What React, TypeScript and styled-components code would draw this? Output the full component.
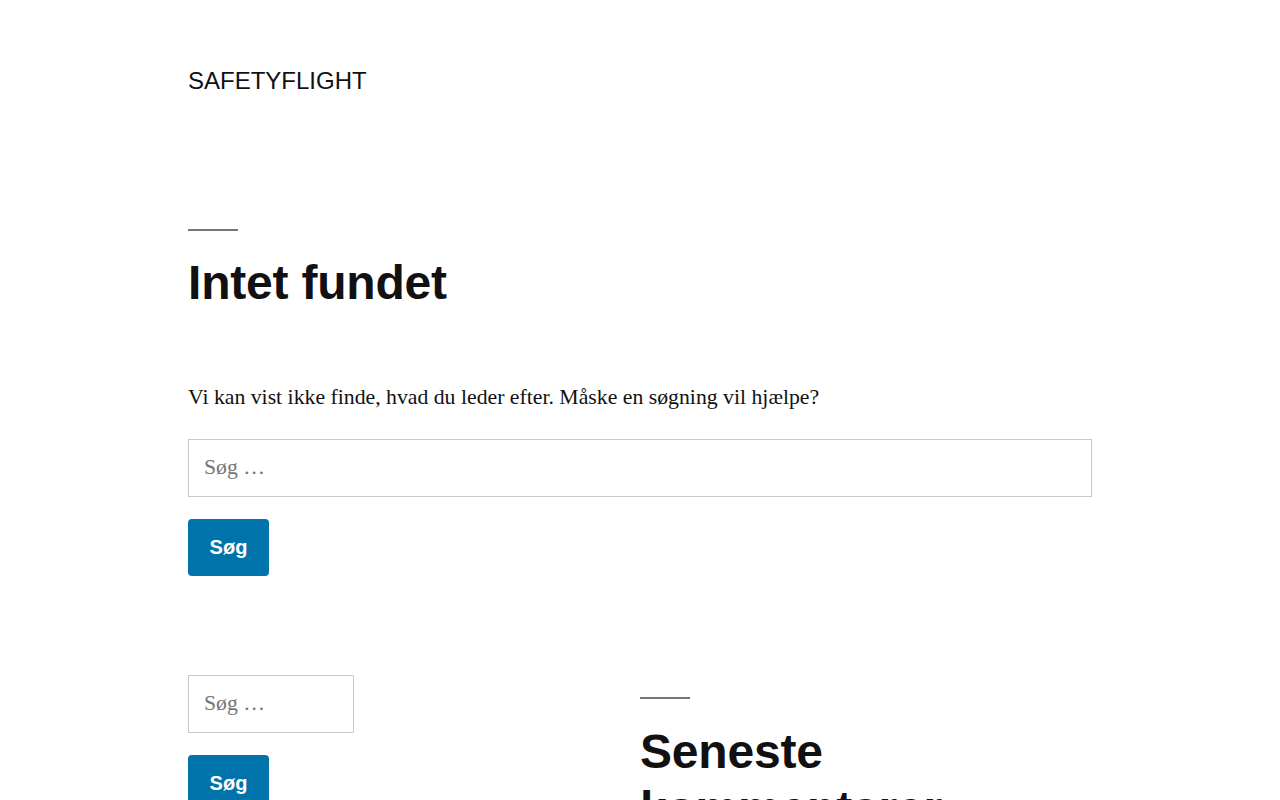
import styled, { createGlobalStyle } from 'styled-components'

const GlobalStyle = createGlobalStyle`
  html, body {
    margin: 0;
    padding: 0;
    background: #fff;
  }

  body {
    color: #111;
    font-family: "Liberation Serif", "Times New Roman", serif;
    font-size: 21.75px;
    line-height: 1.7;
  }

  * {
    box-sizing: border-box;
  }
`

const Page = styled.div`
  max-width: 904px;
  margin: 0 auto;
  padding-top: 65px;
  padding-bottom: 60px;
`

const SiteTitle = styled.div`
  font-family: "Liberation Sans", Arial, sans-serif;
  font-size: 24px;
  line-height: 1.3;
  text-transform: uppercase;
  color: #111;
`

const Main = styled.main`
  padding-top: 133px;
`

const Rule = styled.div`
  width: 50px;
  height: 2px;
  background: #767676;
`

const Heading = styled.h1`
  margin: 23px 0 0;
  font-family: "Liberation Sans", Arial, sans-serif;
  font-size: 48px;
  font-weight: 700;
  line-height: 1.2;
  letter-spacing: -0.2px;
  color: #111;
`

const Lead = styled.p`
  margin: 67px 0 23px;
`

const SearchForm = styled.form<{ $width?: number }>`
  display: flex;
  flex-direction: column;
  align-items: flex-start;
  gap: 22px;

  input {
    width: ${(p) => (p.$width ? `${p.$width}px` : '100%')};
  }
`

const SearchInput = styled.input`
  height: 58px;
  padding: 0 15px;
  border: 1px solid #c9c9c9;
  border-radius: 0;
  background: #fff;
  font-family: "Liberation Serif", "Times New Roman", serif;
  font-size: 21.75px;
  color: #111;
  outline: none;

  &::placeholder {
    color: #767676;
    opacity: 1;
  }
`

const Button = styled.button`
  height: 57px;
  width: 81px;
  padding: 0;
  border: none;
  border-radius: 4px;
  background: #0073aa;
  color: #fff;
  font-family: "Liberation Sans", Arial, sans-serif;
  font-size: 20px;
  font-weight: 700;
  cursor: pointer;
`

const Widgets = styled.aside`
  display: grid;
  grid-template-columns: 1fr 1fr;
  margin-top: 99px;
`

const Widget = styled.section<{ $offset?: number }>`
  padding-top: ${(p) => p.$offset ?? 0}px;
`

const WidgetHeading = styled.h2`
  margin: 24px 0 0;
  font-family: "Liberation Sans", Arial, sans-serif;
  font-size: 48px;
  font-weight: 700;
  line-height: 1.2;
  letter-spacing: -0.2px;
  color: #111;
`

const Search = ({ width }: { width?: number }) => (
  <SearchForm $width={width} onSubmit={(e) => e.preventDefault()}>
    <SearchInput type="search" placeholder="Søg …" />
    <Button type="submit">Søg</Button>
  </SearchForm>
)

const App = () => (
  <>
    <GlobalStyle />
    <Page>
      <header>
        <SiteTitle>Safetyflight</SiteTitle>
      </header>
      <Main>
        <Rule />
        <Heading>Intet fundet</Heading>
        <Lead>
          Vi kan vist ikke finde, hvad du leder efter. Måske en søgning vil
          hjælpe?
        </Lead>
        <Search />
      </Main>
      <Widgets>
        <Widget>
          <Search width={166} />
        </Widget>
        <Widget $offset={22}>
          <Rule />
          <WidgetHeading>
            Seneste
            <br />
            kommentarer
          </WidgetHeading>
        </Widget>
      </Widgets>
    </Page>
  </>
)

export default App
